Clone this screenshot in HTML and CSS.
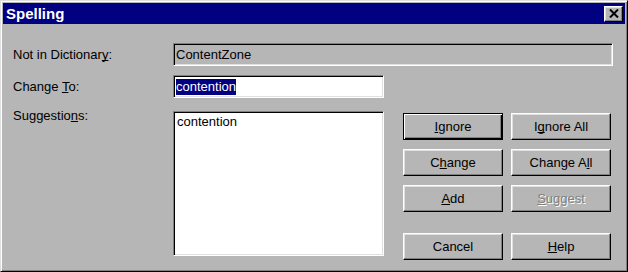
FILE: index.html
```html
<!DOCTYPE html>
<html lang="en">
<head>
    <meta charset="UTF-8">
    <title>Spelling</title>
    <link rel="stylesheet" href="styles.css">
</head>
<body>
    <div class="window">
        <div class="titlebar">
            <span class="title">Spelling</span>
            <button class="close-btn" aria-label="Close">
                <svg width="10" height="9" viewBox="0 0 10 9"><path d="M1 0.5 L9 8.5 M9 0.5 L1 8.5" stroke="#000" stroke-width="2" fill="none"/></svg>
            </button>
        </div>
        <div class="content">
            <div class="row row-first">
                <label class="label">Not in Dictionar<u>y</u>:</label>
                <div class="field field-wide field-readonly">ContentZone</div>
            </div>
            <div class="row row-second">
                <label class="label">Change <u>T</u>o:</label>
                <div class="field field-narrow"><span class="selected">contention</span></div>
            </div>
            <div class="row row-third">
                <label class="label label-top">Suggestio<u>n</u>s:</label>
                <div class="list">
                    <div class="list-item">contention</div>
                </div>
                <div class="buttons">
                    <button class="btn btn-default"><u>I</u>gnore</button>
                    <button class="btn">I<u>g</u>nore All</button>
                    <button class="btn">C<u>h</u>ange</button>
                    <button class="btn">Change A<u>l</u>l</button>
                    <button class="btn"><u>A</u>dd</button>
                    <button class="btn btn-disabled"><u>S</u>uggest</button>
                    <button class="btn btn-bottom">Cancel</button>
                    <button class="btn btn-bottom"><u>H</u>elp</button>
                </div>
            </div>
        </div>
    </div>
</body>
</html>
```
FILE: styles.css
```css
html, body {
    margin: 0;
    padding: 0;
    background: #b6b6b6;
}

body {
    font-family: "Liberation Sans", Arial, sans-serif;
    font-size: 13px;
    line-height: 15px;
    color: #000;
}

u {
    text-underline-offset: 1px;
    text-decoration-skip-ink: none;
}

.window {
    box-sizing: border-box;
    width: 628px;
    height: 272px;
    padding: 2px;
    background: #b6b6b6;
    border: 1px solid;
    border-color: #dfdfdf #000 #000 #dfdfdf;
    box-shadow: inset 1px 1px #fff, inset -1px -1px #808080;
}

.titlebar {
    height: 21px;
    background: #000080;
    display: flex;
    align-items: center;
    justify-content: space-between;
    padding: 0 2px 0 3px;
}

.title {
    color: #fff;
    font-weight: bold;
    font-size: 15px;
    line-height: 17px;
}

.close-btn {
    box-sizing: border-box;
    width: 19px;
    height: 16px;
    padding: 0;
    margin: 0;
    background: #b6b6b6;
    border: 1px solid;
    border-color: #fff #000 #000 #fff;
    box-shadow: inset -1px -1px #808080, inset 1px 1px #dfdfdf;
    display: flex;
    align-items: center;
    justify-content: center;
}

.content {
    padding-left: 10px;
}

.row {
    display: flex;
    align-items: center;
}

.row-first {
    margin-top: 19px;
}

.row-second {
    margin-top: 9px;
}

.row-third {
    margin-top: 10px;
    align-items: flex-start;
}

.label {
    width: 160px;
    flex: none;
}

.field {
    box-sizing: border-box;
    height: 23px;
    display: flex;
    align-items: center;
    border: 1px solid;
    border-color: #808080 #fff #fff #808080;
    box-shadow: inset 1px 1px #000, inset -1px -1px #dfdfdf;
    background: #fff;
    padding: 0 1px 0 2px;
}

.field-wide {
    width: 440px;
}

.field-narrow {
    width: 211px;
}

.field-readonly {
    background: #b6b6b6;
}

.selected {
    background: #000080;
    color: #fff;
    line-height: 16px;
}

.list {
    box-sizing: border-box;
    width: 211px;
    height: 145px;
    margin-top: 3px;
    padding: 2px 3px;
    background: #fff;
    border: 1px solid;
    border-color: #808080 #fff #fff #808080;
    box-shadow: inset 1px 1px #000, inset -1px -1px #dfdfdf;
}

.buttons {
    margin-top: 5px;
    margin-left: 19px;
    display: grid;
    grid-template-columns: 100px 100px;
    grid-template-rows: 27px 27px 27px 39px;
    column-gap: 8px;
    row-gap: 9px;
}

.btn {
    box-sizing: border-box;
    margin: 0;
    padding: 0;
    font-family: inherit;
    font-size: 13px;
    line-height: 15px;
    color: #000;
    background: #b6b6b6;
    border: 1px solid;
    border-color: #fff #000 #000 #fff;
    box-shadow: inset -1px -1px #808080, inset 1px 1px #dfdfdf;
}

.btn-default {
    border-color: #000;
    box-shadow: inset 1px 1px #fff, inset -1px -1px #000, inset -2px -2px #808080;
}

.btn-disabled {
    color: #808080;
    text-shadow: 1px 1px 0 #fff;
}

.btn-bottom {
    align-self: end;
    height: 27px;
}
```
